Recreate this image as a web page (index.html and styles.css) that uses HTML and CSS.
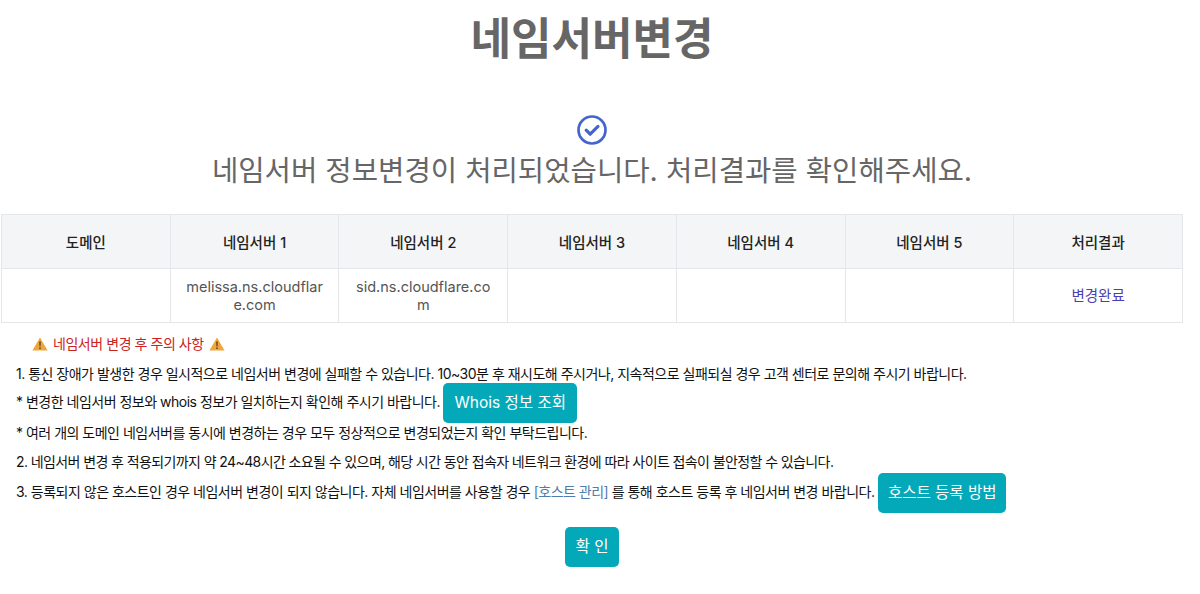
FILE: index.html
```html
<!DOCTYPE html>
<html lang="ko">
<head>
<meta charset="utf-8">
<title>네임서버변경</title>
<link rel="stylesheet" href="styles.css">
</head>
<body>
<main class="page">
  <h1 class="title">네임서버변경</h1>
  <div class="status">
    <svg class="check" viewBox="0 0 30 30" width="30" height="30" aria-hidden="true">
      <circle cx="15" cy="15" r="13.5" fill="none" stroke="#4466cc" stroke-width="2.7"/>
      <path d="M9.2 15.2l4 4 7.8-7.8" fill="none" stroke="#4466cc" stroke-width="3.2" stroke-linecap="round" stroke-linejoin="round"/>
    </svg>
    <h3 class="status-text">네임서버 정보변경이 처리되었습니다. 처리결과를 확인해주세요.</h3>
  </div>
  <table class="result">
    <thead>
      <tr><th>도메인</th><th>네임서버 1</th><th>네임서버 2</th><th>네임서버 3</th><th>네임서버 4</th><th>네임서버 5</th><th>처리결과</th></tr>
    </thead>
    <tbody>
      <tr><td></td><td>melissa.ns.cloudflare.com</td><td>sid.ns.cloudflare.com</td><td></td><td></td><td></td><td class="done">변경완료</td></tr>
    </tbody>
  </table>
  <section class="notes">
    <p class="warn">
      <svg class="tri" viewBox="0 0 16 14" width="16" height="14" aria-hidden="true"><path d="M8 .6 15.6 13.6H.4z" fill="#f0a63a"/><path d="M7.3 4.6h1.4l-.2 5h-1zM7.3 10.6h1.4v1.4H7.3z" fill="#4a3a20"/></svg>
      <span>네임서버 변경 후 주의 사항</span>
      <svg class="tri" viewBox="0 0 16 14" width="16" height="14" aria-hidden="true"><path d="M8 .6 15.6 13.6H.4z" fill="#f0a63a"/><path d="M7.3 4.6h1.4l-.2 5h-1zM7.3 10.6h1.4v1.4H7.3z" fill="#4a3a20"/></svg>
    </p>
    <p class="note n1">1. 통신 장애가 발생한 경우 일시적으로 네임서버 변경에 실패할 수 있습니다. 10~30분 후 재시도해 주시거나, 지속적으로 실패되실 경우 고객 센터로 문의해 주시기 바랍니다.</p>
    <p class="note n2">* 변경한 네임서버 정보와 whois 정보가 일치하는지 확인해 주시기 바랍니다. <a class="btn" href="#">Whois 정보 조회</a></p>
    <p class="note n3">* 여러 개의 도메인 네임서버를 동시에 변경하는 경우 모두 정상적으로 변경되었는지 확인 부탁드립니다.</p>
    <p class="note n4">2. 네임서버 변경 후 적용되기까지 약 24~48시간 소요될 수 있으며, 해당 시간 동안 접속자 네트워크 환경에 따라 사이트 접속이 불안정할 수 있습니다.</p>
    <p class="note n5">3. 등록되지 않은 호스트인 경우 네임서버 변경이 되지 않습니다. 자체 네임서버를 사용할 경우 <a class="link" href="#">[호스트 관리]</a> 를 통해 호스트 등록 후 네임서버 변경 바랍니다. <a class="btn btn-host" href="#">호스트 등록 방법</a></p>
  </section>
  <div class="actions"><a class="btn confirm" href="#">확 인</a></div>
</main>
</body>
</html>
```
FILE: styles.css
```css
* { box-sizing: border-box; }
html, body { margin: 0; background: #fff; }
body {
  font-family: "Inter", "Noto Sans CJK KR", sans-serif;
  color: #111;
  overflow: hidden;
}
.page { width: 1184px; height: 594px; padding: 0 1px; }
.title {
  margin: 0;
  padding-top: 8px;
  height: 112px;
  text-align: center;
  font-size: 44px;
  line-height: 62px;
  font-weight: 700;
  color: #666;
}
.status { display: flex; flex-direction: column; align-items: center; height: 102px; }
.check { display: block; margin-top: 3px; }
.status-text {
  margin: 6px 0 0;
  font-size: 28.65px;
  line-height: 40px;
  font-weight: 400;
  color: #666;
}
.result {
  width: 100%;
  table-layout: fixed;
  border-collapse: collapse;
  font-size: 14.5px;
}
.result th, .result td {
  border: 1px solid #e4e7ea;
  text-align: center;
  word-break: break-all;
  padding: 0 12px;
}
.result th {
  height: 54px;
  background: #f3f5f7;
  font-weight: 500;
  color: #222;
}
.result td { height: 54px; line-height: 18px; color: #555; }
.result td.done { color: #4a3fb0; }
.notes { font-size: 14px; line-height: 20px; letter-spacing: -0.5px; }
.notes p { margin: 0; }
.warn {
  display: flex;
  align-items: center;
  gap: 5px;
  padding: 11px 0 0 31px;
  color: #cc2222;
  letter-spacing: -0.45px;
}
.note { padding-left: 15px; color: #111; white-space: nowrap; }
.n1 { margin-top: 10px !important; }
.n2 { margin-top: -1px !important; }
.n3 { margin-top: 0 !important; }
.n4 { margin-top: 9px !important; letter-spacing: -0.6px; }
.n5 { margin-top: 1px !important; }
.link { color: #4f7cac; text-decoration: none; }
.btn {
  display: inline-block;
  padding: 0 11px;
  height: 40px;
  line-height: 39px;
  border-radius: 5px;
  background: #04a9b9;
  color: #fff;
  font-size: 15.5px;
  letter-spacing: 0;
  text-decoration: none;
  vertical-align: middle;
}
.btn-host { padding: 0 10px; }
.actions { display: flex; justify-content: center; margin-top: 14px; }
.confirm { width: 54px; padding: 0; text-align: center; }
```
